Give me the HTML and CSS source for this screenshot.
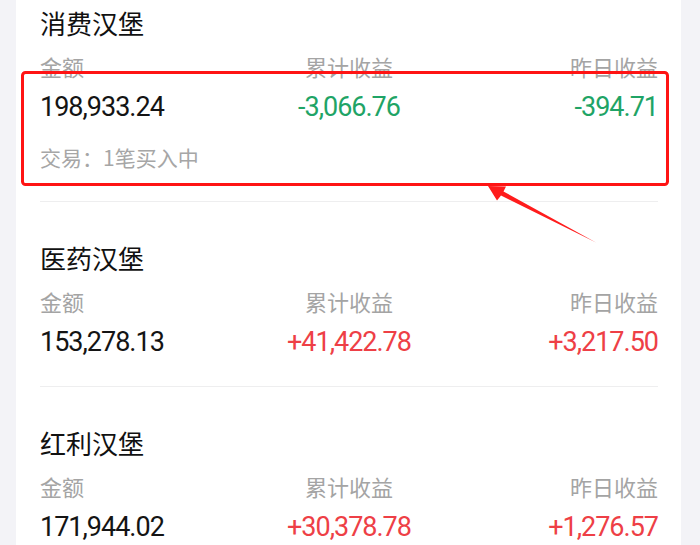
FILE: index.html
```html
<!DOCTYPE html>
<html lang="zh-CN">
<head>
<meta charset="utf-8">
<title>汉堡</title>
<link rel="stylesheet" href="styles.css">
</head>
<body>
<div class="page">
  <div class="card">
    <div class="list">
      <section class="item">
        <div class="title">消费汉堡</div>
        <div class="row labels">
          <span class="c1">金额</span><span class="c2">累计收益</span><span class="c3">昨日收益</span>
        </div>
        <div class="row values">
          <span class="c1">198,933.24</span><span class="c2 down">-3,066.76</span><span class="c3 down">-394.71</span>
        </div>
        <div class="trade">交易：1笔买入中</div>
      </section>
      <section class="item">
        <div class="title">医药汉堡</div>
        <div class="row labels">
          <span class="c1">金额</span><span class="c2">累计收益</span><span class="c3">昨日收益</span>
        </div>
        <div class="row values">
          <span class="c1">153,278.13</span><span class="c2 up">+41,422.78</span><span class="c3 up">+3,217.50</span>
        </div>
      </section>
      <section class="item">
        <div class="title">红利汉堡</div>
        <div class="row labels">
          <span class="c1">金额</span><span class="c2">累计收益</span><span class="c3">昨日收益</span>
        </div>
        <div class="row values">
          <span class="c1">171,944.02</span><span class="c2 up">+30,378.78</span><span class="c3 up">+1,276.57</span>
        </div>
      </section>
    </div>
  </div>
  <svg class="annot" width="700" height="545" viewBox="0 0 700 545" aria-hidden="true">
    <rect x="22.5" y="72.5" width="645" height="112" rx="3" ry="3" fill="none" stroke="#ff1414" stroke-width="3"/>
    <polygon points="488,186 506,186.5 503.5,191.5 596,242.5 501,195.5 497,200.5" fill="#ff1c1c"/>
  </svg>
</div>
</body>
</html>
```

FILE: styles.css
```css
html, body {
  margin: 0;
  padding: 0;
  background: #f3f3f7;
  height: 545px;
  overflow: hidden;
}

.page {
  position: relative;
  width: 700px;
  height: 545px;
  overflow: hidden;
  font-family: "Noto Sans CJK SC", "Noto Sans", sans-serif;
}

.card {
  display: flow-root;
  margin-left: 16px;
  width: 665px;
  background: #ffffff;
  padding: 0 23px 0 24px;
  box-sizing: border-box;
}

.list {
  margin-top: -33px;
}

.item {
  padding: 38px 0 26px;
  border-bottom: 1px solid #eeeeef;
}

.title {
  font-size: 26px;
  line-height: 36px;
  color: #111111;
}

.row {
  display: grid;
  grid-template-columns: 1fr 1fr 1fr;
}

.c1 { text-align: left; }
.c2 { text-align: center; }
.c3 { text-align: right; }

.labels {
  margin-top: 10px;
  font-size: 22px;
  line-height: 30px;
  color: #a4a4a4;
}

.values {
  margin-top: 8px;
  font-family: Roboto, "Noto Sans CJK SC", sans-serif;
  font-size: 27px;
  line-height: 36px;
  letter-spacing: -1px;
  color: #141414;
}

.down { color: #1fa466; }
.up { color: #ee3f46; }

.trade {
  margin-top: 14px;
  font-size: 21px;
  line-height: 36px;
  color: #a6a6a6;
}

.annot {
  position: absolute;
  left: 0;
  top: 0;
  pointer-events: none;
}
```
